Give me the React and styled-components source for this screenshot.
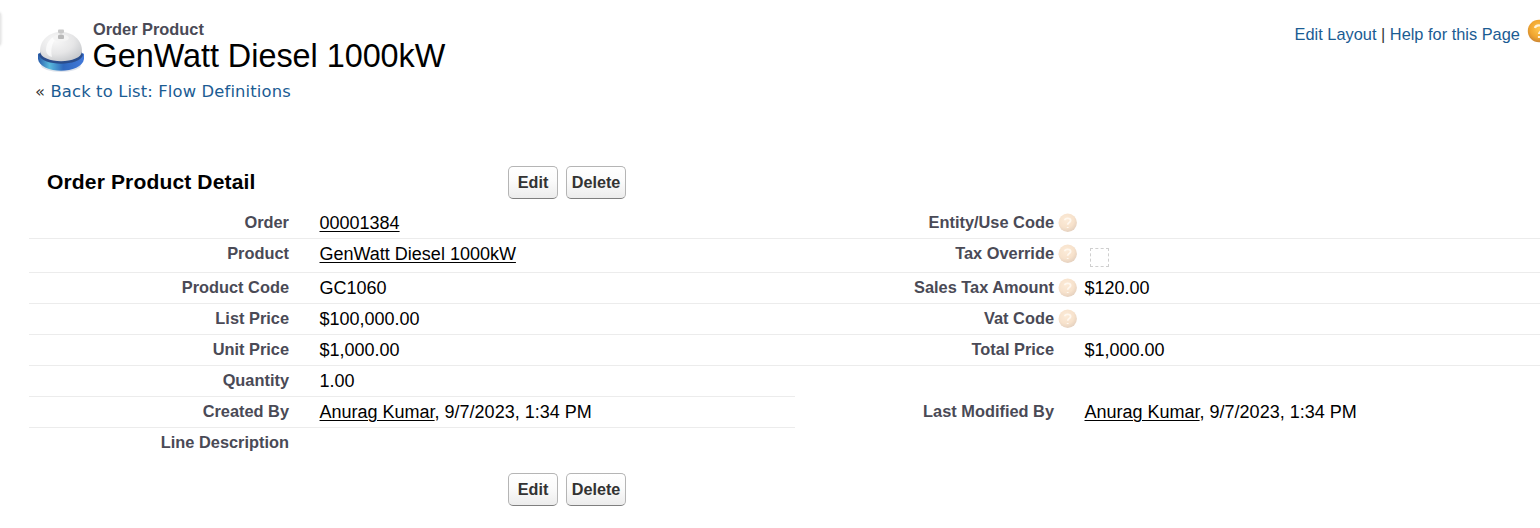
import React from 'react';
import styled, { createGlobalStyle } from 'styled-components';

const GlobalStyle = createGlobalStyle`
  * { box-sizing: border-box; }
  html, body { margin: 0; background: #fff; overflow: hidden; }
  body { font-family: Arial, "Liberation Sans", sans-serif; font-size: 18px; color: #000; }
`;

const Page = styled.main`
  position: relative;
  width: 1540px;
  height: 528px;
  overflow: hidden;
`;

const EdgeShadow = styled.div`
  position: absolute;
  left: -8px;
  top: 12px;
  width: 9px;
  height: 34px;
  border-radius: 4px;
  background: #e8e8e8;
  box-shadow: 0 0 3px #d4d4d4;
`;

const Header = styled.header`
  display: flex;
  align-items: flex-start;
  height: 80px;
  padding: 20px 0 0 36px;
`;

const BellIcon = styled.svg`
  width: 50px;
  height: 54px;
  flex: none;
`;

const Titles = styled.div`
  flex: 1;
  padding-left: 7px;
`;

const TypeLabel = styled.div`
  height: 19px;
  line-height: 19px;
  font-size: 16.38px;
  font-weight: bold;
  color: #4a4a56;
`;

const Title = styled.h1`
  margin: 0 0 0 -0.5px;
  height: 34px;
  line-height: 34px;
  font-size: 32.4px;
  letter-spacing: -0.03px;
  font-weight: normal;
  white-space: nowrap;
`;

const HelpLinks = styled.nav`
  display: flex;
  flex: none;
  width: 245.4px;
  padding-top: 4px;
  line-height: 20px;
  font-size: 16.38px;
  color: #333;
  white-space: pre;
`;

const Link = styled.a`
  color: #1b5c93;
`;

const HelpBall = styled.svg`
  flex: none;
  width: 24px;
  height: 24px;
  margin: -5px 0 0 7px;
`;

const BackLink = styled.div`
  height: 22px;
  line-height: 22px;
  padding: 1px 0 0 35px;
  font-family: "DejaVu Sans", Verdana, sans-serif;
  font-size: 16.38px;
  letter-spacing: 0.14px;
  color: #333;
  white-space: pre;
`;

const Detail = styled.section`
  padding: 64px 0 0 29px;
`;

const DetailHead = styled.div`
  display: flex;
  height: 42px;
`;

const DetailTitle = styled.h2`
  margin: 0;
  width: 479px;
  padding-left: 18px;
  line-height: 32px;
  font-size: 21.06px;
  letter-spacing: 0.13px;
`;

const Buttons = styled.div`
  display: flex;
  gap: 8px;
  padding-left: ${(p) => p.$indent || 0}px;
`;

const Button = styled.button`
  width: ${(p) => p.$width}px;
  height: 33px;
  padding: 0;
  border: 1px solid #b5b5b5;
  border-bottom-color: #7f7f7f;
  border-radius: 5px;
  background: linear-gradient(#fff, #fbfbfb 45%, #ececec);
  font: bold 16.2px Arial, "Liberation Sans", sans-serif;
  color: #333;
`;

const Row = styled.div`
  display: grid;
  grid-template-columns: 766px 1fr;
  height: ${(p) => p.$height || 31}px;
`;

const Cell = styled.div`
  display: flex;
  height: 100%;
  border-bottom: ${(p) => (p.$line ? '1px solid #ececec' : 'none')};
  line-height: 30px;
  white-space: nowrap;
`;

const Label = styled.div`
  width: ${(p) => (p.$right ? 259 : 260)}px;
  flex: none;
  line-height: 28px;
  text-align: right;
  font-size: 16.38px;
  font-weight: bold;
  color: #4a4a56;
`;

const HelpSlot = styled.div`
  width: 30.5px;
  flex: none;
  padding: 5px 0 0 4px;
  line-height: 0;
`;

const Value = styled.div`
  a { color: #000; text-decoration: underline; text-underline-offset: 2px; text-decoration-thickness: 1px; }
`;

const Checkbox = styled.div`
  width: 19px;
  height: 19px;
  margin: 9px 0 0 5.5px;
  border: 1px dashed #cfcfcf;
`;

const Footer = styled.div`
  padding-top: 14px;
`;

const Bell = () => (
  <BellIcon viewBox="0 0 50 54">
    <defs>
      <radialGradient id="dome" cx=".36" cy=".3" r=".75">
        <stop offset="0" stopColor="#f8f8f8" />
        <stop offset=".6" stopColor="#e6e6e7" />
        <stop offset="1" stopColor="#c9cbce" />
      </radialGradient>
      <linearGradient id="base">
        <stop offset="0" stopColor="#2a5cab" />
        <stop offset=".25" stopColor="#58b9dc" />
        <stop offset=".55" stopColor="#2f68be" />
        <stop offset="1" stopColor="#4279da" />
      </linearGradient>
    </defs>
    <ellipse cx="25" cy="45" rx="20" ry="7" fill="#dfe4ec" />
    <path d="M2 34C3 31 47 31 48 34V39C46 54.5 4 54.5 2 39Z" fill="url(#base)" />
    <path d="M3 35C6 46.5 44 46.5 47 35L45 31H5Z" fill="#2a4d8c" />
    <path d="M4 31C4 20 13 12 25 12S46 20 46 31C46 44.5 4 44.5 4 31Z" fill="url(#dome)" />
    <path d="M10 30C10 21 17 16 23 15C17 20 14 28 16 37C12 36 10 33 10 30Z" fill="#fff" opacity=".7" />
    <ellipse cx="25" cy="18" rx="8" ry="3.5" fill="#f4f4f4" />
    <rect x="23.5" y="11" width="3" height="6" fill="#d8d8d8" />
    <rect x="22" y="9.5" width="6" height="3.5" rx="1" fill="#c9c9c9" />
    <rect x="22" y="15" width="6" height="4" rx="1" fill="#b9b9b9" />
  </BellIcon>
);

const FieldHelp = () => (
  <svg width="20" height="20" viewBox="0 0 20 20">
    <defs>
      <radialGradient id="fieldHelp" cx=".42" cy=".35" r=".65">
        <stop offset="0" stopColor="#fcebd8" />
        <stop offset=".65" stopColor="#f7e2cc" />
        <stop offset="1" stopColor="#e6d2c0" />
      </radialGradient>
    </defs>
    <circle cx="9.7" cy="9.7" r="9.2" fill="url(#fieldHelp)" />
    <path d="M6.8 7.2C7 4.8 12.6 4.7 12.6 7.6C12.6 9.6 9.7 9.5 9.7 11.7M9.7 14V15" fill="none" stroke="#fff8ef" strokeWidth="1.8" />
  </svg>
);

const PageHelp = () => (
  <HelpBall viewBox="0 0 24 24">
    <defs>
      <radialGradient id="pageHelp" cx=".5" cy=".4" r=".62">
        <stop offset="0" stopColor="#ffc64d" />
        <stop offset=".65" stopColor="#f0a52f" />
        <stop offset="1" stopColor="#c98434" />
      </radialGradient>
    </defs>
    <circle cx="12" cy="12" r="11.2" fill="url(#pageHelp)" />
    <path d="M8 9C8.5 5.5 16 5.5 16 9.5C16 12 12 12 12 15M12 17V19" fill="none" stroke="#fff1d6" strokeWidth="2.2" />
  </HelpBall>
);

const Field = ({ label, value, help, right, line }) => (
  <Cell $line={line}>
    <Label $right={right}>{label}</Label>
    <HelpSlot>{help && <FieldHelp />}</HelpSlot>
    <Value>{value}</Value>
  </Cell>
);

const Actions = ({ indent }) => (
  <Buttons $indent={indent}>
    <Button $width={50}>Edit</Button>
    <Button $width={60}>Delete</Button>
  </Buttons>
);

const stamp = <><a>Anurag Kumar</a>, 9/7/2023, 1:34 PM</>;

const rows = [
  { left: ['Order', <a>00001384</a>], right: ['Entity/Use Code', '', true] },
  { left: ['Product', <a>GenWatt Diesel 1000kW</a>], right: ['Tax Override', <Checkbox />, true], height: 34 },
  { left: ['Product Code', 'GC1060'], right: ['Sales Tax Amount', '$120.00', true] },
  { left: ['List Price', '$100,000.00'], right: ['Vat Code', '', true] },
  { left: ['Unit Price', '$1,000.00'], right: ['Total Price', '$1,000.00'] },
  { left: ['Quantity', '1.00'] },
  { left: ['Created By', stamp], right: ['Last Modified By', stamp], rightLine: false },
  { left: ['Line Description', ''], line: false },
];

export default function App() {
  return (
    <Page>
      <GlobalStyle />
      <EdgeShadow />
      <Header>
        <Bell />
        <Titles>
          <TypeLabel>Order Product</TypeLabel>
          <Title>GenWatt Diesel 1000kW</Title>
        </Titles>
        <HelpLinks>
          <Link>Edit Layout</Link> | <Link>Help for this Page</Link>
          <PageHelp />
        </HelpLinks>
      </Header>
      <BackLink>« <Link>Back to List: Flow Definitions</Link></BackLink>
      <Detail>
        <DetailHead>
          <DetailTitle>Order Product Detail</DetailTitle>
          <Actions />
        </DetailHead>
        {rows.map((r) => (
          <Row key={r.left[0]} $height={r.height}>
            <Field label={r.left[0]} value={r.left[1]} line={r.line !== false} />
            {r.right && (
              <Field right label={r.right[0]} value={r.right[1]} help={r.right[2]} line={r.rightLine !== false} />
            )}
          </Row>
        ))}
        <Footer><Actions indent={479} /></Footer>
      </Detail>
    </Page>
  );
}
